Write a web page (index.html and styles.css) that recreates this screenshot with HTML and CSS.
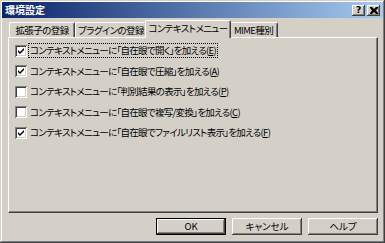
FILE: index.html
```html
<!DOCTYPE html>
<html lang="ja">
<head>
    <meta charset="UTF-8">
    <title>環境設定</title>
    <link rel="stylesheet" href="styles.css">
</head>
<body>

<div class="window">
    <!-- Title bar -->
    <div class="titlebar">
        <span class="title">環境設定</span>
        <div class="title-buttons">
            <span class="tb">?</span>
            <span class="tb">
                <svg width="8" height="7" viewBox="0 0 8 7"><path d="M0 0h2l2 2 2-2h2v1L6 3.5 8 6v1H6L4 5 2 7H0V6l2-2.5L0 1z" fill="#000"/></svg>
            </span>
        </div>
    </div>

    <div class="content">
        <!-- Tabs -->
        <div class="tabs">
            <div class="tab tab-ext">拡張子の登録</div>
            <div class="tab tab-plugin">プラグインの登録</div>
            <div class="tab tab-menu selected">コンテキストメニュー</div>
            <div class="tab tab-mime">MIME種別</div>
        </div>

        <!-- Tab panel -->
        <div class="panel">
            <label class="row">
                <span class="check on"></span>
                <span class="text focus">コンテキストメニューに「自在眼で開く」を加える(<u>E</u>)</span>
            </label>
            <label class="row">
                <span class="check on"></span>
                <span class="text">コンテキストメニューに「自在眼で圧縮」を加える(<u>A</u>)</span>
            </label>
            <label class="row">
                <span class="check"></span>
                <span class="text">コンテキストメニューに「判別結果の表示」を加える(<u>P</u>)</span>
            </label>
            <label class="row">
                <span class="check"></span>
                <span class="text">コンテキストメニューに「自在眼で複写/変換」を加える(<u>C</u>)</span>
            </label>
            <label class="row">
                <span class="check on"></span>
                <span class="text">コンテキストメニューに「自在眼でファイルリスト表示」を加える(<u>F</u>)</span>
            </label>
        </div>

        <!-- Dialog buttons -->
        <div class="buttons">
            <div class="btn default">OK</div>
            <div class="btn">キャンセル</div>
            <div class="btn">ヘルプ</div>
        </div>
    </div>
</div>

</body>
</html>
```

FILE: styles.css
```css
/* Global Styles */
body {
    margin: 0;
    padding: 0;
    font-family: "Noto Sans CJK JP", sans-serif;
    font-size: 9.5px;
    color: #000;
    background-color: #d4d0c8;
}

.window {
    box-sizing: border-box;
    width: 385px;
    height: 243px;
    padding: 2px;
    background-color: #d4d0c8;
    box-shadow: inset -1px -1px #404040, inset 1px 1px #d4d0c8,
                inset -2px -2px #808080, inset 2px 2px #ffffff;
    display: flex;
    flex-direction: column;
}

/* Title bar */
.titlebar {
    height: 16px;
    display: flex;
    align-items: center;
    justify-content: space-between;
    padding: 0 3px 0 3px;
    background: linear-gradient(to right, #0a246a, #a6caf0);
}

.title {
    color: #ffffff;
    font-weight: bold;
    font-size: 10px;
    line-height: 16px;
}

.title-buttons {
    display: flex;
    gap: 2px;
}

.tb {
    box-sizing: border-box;
    width: 13px;
    height: 11px;
    background-color: #d4d0c8;
    box-shadow: inset -1px -1px #404040, inset 1px 1px #ffffff,
                inset -2px -2px #808080;
    display: flex;
    align-items: center;
    justify-content: center;
    font-family: "DejaVu Sans", sans-serif;
    font-weight: bold;
    font-size: 9px;
    line-height: 11px;
}

/* Content */
.content {
    flex: 1;
    padding: 2px 5px 0 6px;
    display: flex;
    flex-direction: column;
}

.tabs {
    display: flex;
    align-items: flex-end;
    height: 17px;
    padding-left: 1px;
    position: relative;
    z-index: 1;
}

.tab {
    box-sizing: border-box;
    height: 15px;
    line-height: 14px;
    text-align: center;
    white-space: nowrap;
    font-feature-settings: "palt";
    letter-spacing: -0.6px;
    border-top: 1px solid #ffffff;
    border-left: 1px solid #ffffff;
    border-right: 1px solid #404040;
    border-top-left-radius: 2px;
    border-top-right-radius: 2px;
    box-shadow: inset -1px 0 #808080;
    background-color: #d4d0c8;
}

.tab-ext { width: 66px; }
.tab-plugin { width: 72px; }
.tab-menu { width: 86px; }
.tab-mime { width: 49px; }

.tab.selected {
    height: 18px;
    margin: 0 -2px -1px -2px;
    line-height: 15px;
    position: relative;
    z-index: 2;
}

.panel {
    box-sizing: border-box;
    height: 176px;
    padding: 6px 0 0 6px;
    border-top: 1px solid #ffffff;
    border-left: 1px solid #ffffff;
    border-right: 1px solid #404040;
    border-bottom: 1px solid #404040;
    box-shadow: inset -1px -1px #808080;
    display: flex;
    flex-direction: column;
    gap: 7.5px;
}

.row {
    display: flex;
    align-items: center;
    height: 13px;
    gap: 2px;
}

.check {
    box-sizing: border-box;
    width: 12px;
    height: 12px;
    background-color: #ffffff;
    box-shadow: inset 1px 1px #808080, inset -1px -1px #ffffff,
                inset 2px 2px #404040, inset -2px -2px #d4d0c8;
    flex-shrink: 0;
}

.check.on {
    background-image: url("data:image/svg+xml,%3Csvg xmlns='http://www.w3.org/2000/svg' width='12' height='12'%3E%3Cpath d='M3 5v2l2 2 4-4V3L5 7z' fill='%23000'/%3E%3C/svg%3E");
}

.text {
    font-feature-settings: "palt";
    letter-spacing: -0.7px;
    line-height: 13px;
    padding: 0 1px;
    white-space: nowrap;
}

.text.focus {
    outline: 1px dotted #000;
}

/* Dialog buttons */
.buttons {
    display: flex;
    justify-content: flex-end;
    gap: 6px;
    padding-top: 5px;
}

.btn {
    box-sizing: border-box;
    width: 70px;
    height: 17px;
    text-align: center;
    line-height: 17px;
    font-feature-settings: "palt";
    background-color: #d4d0c8;
    box-shadow: inset -1px -1px #404040, inset 1px 1px #ffffff,
                inset -2px -2px #808080;
}

.btn.default {
    box-shadow: inset 0 0 0 1px #000, inset -2px -2px #404040,
                inset 2px 2px #ffffff, inset -3px -3px #808080;
}
```
